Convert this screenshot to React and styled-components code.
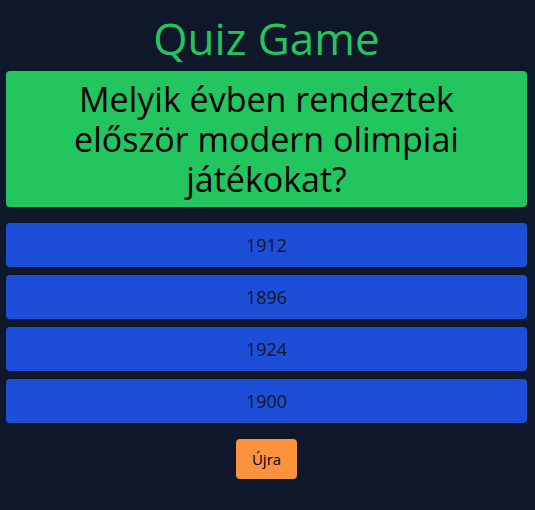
import React, { useState } from "react";
import styled, { createGlobalStyle } from "styled-components";

const GlobalStyle = createGlobalStyle`
  html, body {
    margin: 0;
    padding: 0;
    background: #0f172a;
    font-family: "Open Sans", "Noto Sans", sans-serif;
  }
`;

const Page = styled.div`
  min-height: 510px;
  padding: 8px 8px 8px 6px;
  box-sizing: border-box;
  display: flex;
  flex-direction: column;
  align-items: stretch;
`;

const Title = styled.h1`
  margin: 4px 0 7px;
  text-align: center;
  color: #22c55e;
  font-size: 44px;
  line-height: 52px;
  font-weight: 400;
`;

const QuestionBox = styled.div`
  background: #22c55e;
  border-radius: 4px;
  padding: 8px 40px;
  text-align: center;
  color: #000;
  font-size: 34px;
  line-height: 40px;
`;

const Answers = styled.div`
  display: flex;
  flex-direction: column;
  gap: 8px;
  margin-top: 16px;
`;

const AnswerButton = styled.button`
  border: none;
  border-radius: 4px;
  background: #1d4ed8;
  color: #0f172a;
  font-family: inherit;
  font-size: 18px;
  line-height: 28px;
  padding: 8px;
  cursor: pointer;
`;

const Footer = styled.div`
  display: flex;
  justify-content: center;
  margin-top: 16px;
`;

const RestartButton = styled.button`
  border: none;
  border-radius: 4px;
  background: #fb923c;
  color: #000;
  font-family: inherit;
  font-size: 15px;
  width: 61px;
  height: 40px;
  cursor: pointer;
`;

const answers = ["1912", "1896", "1924", "1900"];

export default function App() {
  const [picked, setPicked] = useState(null);

  return (
    <Page>
      <GlobalStyle />
      <Title>Quiz Game</Title>
      <QuestionBox>
        Melyik évben rendeztek először modern olimpiai játékokat?
      </QuestionBox>
      <Answers>
        {answers.map((a) => (
          <AnswerButton key={a} onClick={() => setPicked(a)}>
            {a}
          </AnswerButton>
        ))}
      </Answers>
      <Footer>
        <RestartButton onClick={() => setPicked(null)}>Újra</RestartButton>
      </Footer>
    </Page>
  );
}
